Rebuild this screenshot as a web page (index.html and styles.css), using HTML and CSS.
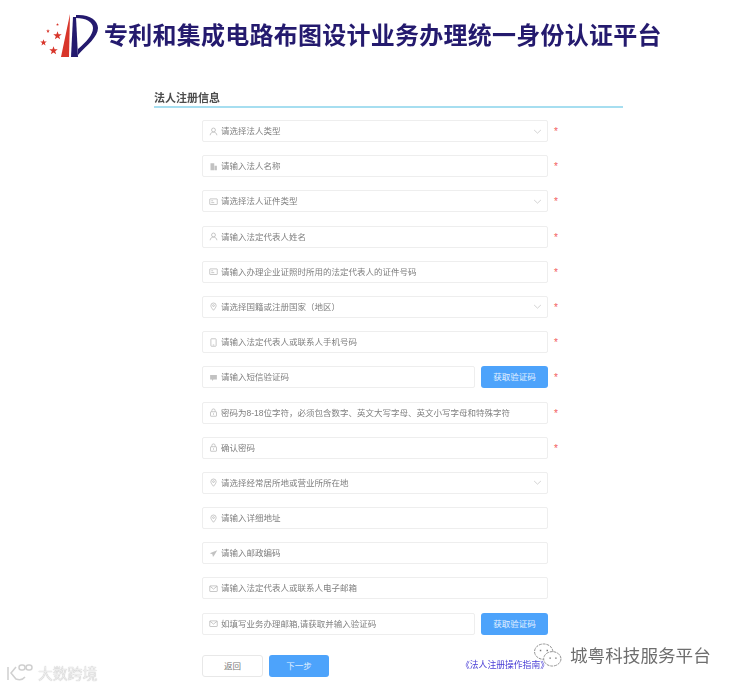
FILE: index.html
```html
<!DOCTYPE html>
<html lang="zh-CN">
<head>
  <meta charset="UTF-8">
  <title>法人注册信息</title>
  <link rel="stylesheet" href="styles.css">
</head>
<body>
  <svg class="sprites" width="0" height="0">
    <symbol id="i-user" viewBox="0 0 12 12"><circle cx="6" cy="4" r="2.6"/><path d="M1.500 11c.4-2.800 2-4.200 4.500-4.200s4.100 1.400 4.500 4.200"/></symbol>
    <symbol id="i-doc" viewBox="0 0 12 12"><path class="solid" d="M2 1.500h5v9.500H2zM7.500 5h3v6h-3z"/></symbol>
    <symbol id="i-card" viewBox="0 0 12 12"><rect x="1" y="2.500" width="10" height="7.500" rx=".6"/><path d="M3 5h2.500M3 7.500h4"/></symbol>
    <symbol id="i-pin" viewBox="0 0 12 12"><path d="M6 11C3.800 8.400 2.500 6.700 2.500 4.800a3.500 3.500 0 0 1 7 0C9.500 6.700 8.200 8.400 6 11z"/><circle cx="6" cy="4.800" r="1.200"/></symbol>
    <symbol id="i-phone" viewBox="0 0 12 12"><rect x="2.500" y="1" width="7" height="10" rx=".8"/><path d="M5 9.300h2"/></symbol>
    <symbol id="i-msg" viewBox="0 0 12 12"><path class="solid" d="M1.500 2.500h9v6H6L4 10.500v-2H1.500z"/></symbol>
    <symbol id="i-lock" viewBox="0 0 12 12"><rect x="2" y="5" width="8" height="6" rx=".6"/><path d="M3.800 5V3.400a2.200 2.200 0 0 1 4.400 0V5M6 7v2"/></symbol>
    <symbol id="i-send" viewBox="0 0 12 12"><path class="solid" d="M11 1.500 1 5.800l3.500 1.300.8 3.400 1.800-2.300z"/></symbol>
    <symbol id="i-mail" viewBox="0 0 12 12"><rect x="1" y="2.500" width="10" height="7.500" rx=".6"/><path d="M1.300 3 6 6.800 10.700 3"/></symbol>
    <symbol id="i-down" viewBox="0 0 12 12"><path d="M1.500 4 6 8.200 10.500 4"/></symbol>
    <symbol id="i-star" viewBox="0 0 10 10"><path d="M5 .3 6.200 3.600 9.700 3.700 6.900 5.800 7.900 9.200 5 7.200 2.100 9.200 3.100 5.800.3 3.700 3.800 3.600z"/></symbol>
  </svg>

  <header class="site-header">
    <svg class="logo" width="62" height="48" viewBox="0 0 62 48">
      <use href="#i-star" class="logo-star" x="14" y="20" width="9" height="9"/>
      <use href="#i-star" class="logo-star" x="1" y="28" width="7" height="7"/>
      <use href="#i-star" class="logo-star" x="10" y="35" width="9" height="9"/>
      <use href="#i-star" class="logo-star" x="7" y="18" width="4" height="4"/>
      <use href="#i-star" class="logo-star" x="17" y="12" width="3" height="3"/>
      <path d="M31 3 L30 46 L22 46z" fill="#d8352a"/>
      <path d="M34 6 L37 6 L39 46 L32 46z" fill="#241a6e"/>
      <path d="M37 4C50 3 59 9 59 17 59 26 48 34 39 44L39 38C47 31 54 24 54 17 54 11 47 7 37 7z" fill="#241a6e"/>
    </svg>
    <h1 class="site-title">专利和集成电路布图设计业务办理统一身份认证平台</h1>
  </header>

  <main class="panel">
    <h2 class="panel-title">法人注册信息</h2>
    <form class="reg-form">
      <div class="row">
        <div class="field"><svg class="ico"><use href="#i-user"/></svg><span class="ph">请选择法人类型</span><svg class="chev"><use href="#i-down"/></svg></div>
        <span class="req">*</span>
      </div>
      <div class="row">
        <div class="field"><svg class="ico"><use href="#i-doc"/></svg><span class="ph">请输入法人名称</span></div>
        <span class="req">*</span>
      </div>
      <div class="row">
        <div class="field"><svg class="ico"><use href="#i-card"/></svg><span class="ph">请选择法人证件类型</span><svg class="chev"><use href="#i-down"/></svg></div>
        <span class="req">*</span>
      </div>
      <div class="row">
        <div class="field"><svg class="ico"><use href="#i-user"/></svg><span class="ph">请输入法定代表人姓名</span></div>
        <span class="req">*</span>
      </div>
      <div class="row">
        <div class="field"><svg class="ico"><use href="#i-card"/></svg><span class="ph">请输入办理企业证照时所用的法定代表人的证件号码</span></div>
        <span class="req">*</span>
      </div>
      <div class="row">
        <div class="field"><svg class="ico"><use href="#i-pin"/></svg><span class="ph">请选择国籍或注册国家（地区）</span><svg class="chev"><use href="#i-down"/></svg></div>
        <span class="req">*</span>
      </div>
      <div class="row">
        <div class="field"><svg class="ico"><use href="#i-phone"/></svg><span class="ph">请输入法定代表人或联系人手机号码</span></div>
        <span class="req">*</span>
      </div>
      <div class="row">
        <div class="field-group">
          <div class="field"><svg class="ico"><use href="#i-msg"/></svg><span class="ph">请输入短信验证码</span></div>
          <button type="button" class="btn-code">获取验证码</button>
        </div>
        <span class="req">*</span>
      </div>
      <div class="row">
        <div class="field"><svg class="ico"><use href="#i-lock"/></svg><span class="ph">密码为8-18位字符，必须包含数字、英文大写字母、英文小写字母和特殊字符</span></div>
        <span class="req">*</span>
      </div>
      <div class="row">
        <div class="field"><svg class="ico"><use href="#i-lock"/></svg><span class="ph">确认密码</span></div>
        <span class="req">*</span>
      </div>
      <div class="row">
        <div class="field"><svg class="ico"><use href="#i-pin"/></svg><span class="ph">请选择经常居所地或营业所所在地</span><svg class="chev"><use href="#i-down"/></svg></div>
      </div>
      <div class="row">
        <div class="field"><svg class="ico"><use href="#i-pin"/></svg><span class="ph">请输入详细地址</span></div>
      </div>
      <div class="row">
        <div class="field"><svg class="ico"><use href="#i-send"/></svg><span class="ph">请输入邮政编码</span></div>
      </div>
      <div class="row">
        <div class="field"><svg class="ico"><use href="#i-mail"/></svg><span class="ph">请输入法定代表人或联系人电子邮箱</span></div>
      </div>
      <div class="row">
        <div class="field-group">
          <div class="field"><svg class="ico"><use href="#i-mail"/></svg><span class="ph">如填写业务办理邮箱,请获取并输入验证码</span></div>
          <button type="button" class="btn-code">获取验证码</button>
        </div>
      </div>
      <div class="actions">
        <button type="button" class="btn-back">返回</button>
        <button type="button" class="btn-next">下一步</button>
        <a class="guide" href="#">《法人注册操作指南》</a>
      </div>
    </form>
  </main>

  <!-- 图片水印 -->
  <div class="mark-left">
    <svg width="27" height="17" viewBox="0 0 27 17"><path d="M2 3v13M10 3 5 9l5 6c4 1.500 7 .5 9-2"/><rect x="13" y="1" width="6" height="5" rx="2.500"/><rect x="20" y="1" width="6" height="5" rx="2.500"/></svg>
    <span>大数跨境</span>
  </div>
  <div class="mark-right">
    <svg width="29" height="24" viewBox="0 0 30 25"><ellipse cx="11" cy="9" rx="9.500" ry="8"/><ellipse cx="20" cy="16.500" rx="9" ry="7.500"/><path class="dot" d="M7 7h1.500v1.500H7zM14 7h1.500v1.500H14zM17 15h1.500v1.500H17zM23 15h1.500v1.500H23z"/></svg>
    <span>城粤科技服务平台</span>
  </div>
</body>
</html>
```

FILE: styles.css
```css
* {
  box-sizing: border-box;
}
body {
  margin: 0;
  height: 686px;
  overflow: hidden;
  background: #fff;
  font-family: "Liberation Sans", "Noto Sans CJK SC", sans-serif;
  position: relative;
}
.sprites {
  position: absolute;
}
/* 顶部标题 */
.site-header {
  display: flex;
  align-items: center;
  gap: 3px;
  height: 70px;
  padding: 0 0 0 39px;
}
.logo {
  flex: none;
  filter: blur(0.4px);
}
.logo-star {
  fill: #d8352a;
}
.site-title {
  margin: 0;
  padding-bottom: 3px;
  font-size: 24px;
  font-weight: 700;
  letter-spacing: 0.25px;
  white-space: nowrap;
  color: #241a6e;
  filter: blur(0.4px);
}
/* 表单区 */
.panel {
  margin: 20px 0 0 154px;
  width: 469px;
}
.panel-title {
  margin: 0;
  height: 18px;
  padding-top: 1px;
  line-height: 15px;
  font-size: 11px;
  font-weight: 700;
  color: #4c4c4c;
  border-bottom: 2px solid #a6def0;
  filter: blur(0.4px);
}
.reg-form {
  display: flex;
  flex-direction: column;
  gap: 13.2px;
  padding: 12px 0 0 48px;
}
.row {
  display: flex;
  height: 22px;
}
.field-group {
  display: flex;
  gap: 6px;
  width: 346px;
}
.field {
  display: flex;
  align-items: center;
  width: 346px;
  height: 22px;
  padding: 0 5px 0 6px;
  border: 1px solid #eee;
  border-radius: 2px;
}
.field-group .field {
  width: 273px;
}
.ico {
  flex: none;
  width: 9px;
  height: 9px;
  margin-right: 3px;
  fill: none;
  stroke: #b5b5b5;
  stroke-width: 1;
}
.solid {
  fill: #c2c2c2;
  stroke: none;
}
.ph {
  flex: 1;
  padding-bottom: 2px;
  font-size: 8.500px;
  color: #808080;
  white-space: nowrap;
  filter: blur(0.4px);
}
.chev {
  flex: none;
  width: 9px;
  height: 9px;
  fill: none;
  stroke: #c4c4c4;
  stroke-width: 1;
}
.req {
  margin-left: 6px;
  font-size: 10px;
  line-height: 24px;
  color: #f25c5c;
}
.btn-code,
.btn-next {
  border: none;
  border-radius: 3px;
  background: #4da3fb;
  color: #e4f1ff;
  font: inherit;
  font-size: 8.500px;
  padding: 0 0 2px;
}
.btn-code {
  width: 67px;
  height: 22px;
}
.actions {
  display: flex;
  align-items: center;
  gap: 6px;
  margin-top: 7px;
  height: 22px;
}
.btn-back {
  width: 61px;
  height: 22px;
  padding: 0 0 2px;
  border: 1px solid #e8e8e8;
  border-radius: 3px;
  background: #fff;
  color: #777;
  font: inherit;
  font-size: 8.500px;
}
.btn-next {
  width: 60px;
  height: 22px;
}
.guide {
  margin: 0 0 2px 126px;
  font-size: 8.800px;
  color: #4a3fd6;
  text-decoration: none;
  white-space: nowrap;
  filter: blur(0.3px);
}
/* 水印 */
.mark-left {
  position: absolute;
  left: 6px;
  top: 662px;
  display: flex;
  align-items: center;
  gap: 5px;
  color: #ececec;
  text-shadow: 0 0 1px #a8a8a8;
  font-size: 14.800px;
  filter: blur(0.3px);
}
.mark-left svg {
  fill: none;
  stroke: #d0d0d0;
  stroke-width: 1.500;
}
.mark-right {
  position: absolute;
  left: 533px;
  top: 642px;
  display: flex;
  align-items: center;
  gap: 8px;
  color: #6e6e6e;
  font-size: 17.600px;
  white-space: nowrap;
  filter: blur(0.3px);
}
.mark-right svg {
  fill: #fff;
  stroke: #8d8d8d;
  stroke-width: 1;
  stroke-dasharray: 3 1;
}
.mark-right .dot {
  fill: #777;
  stroke: none;
}
```
